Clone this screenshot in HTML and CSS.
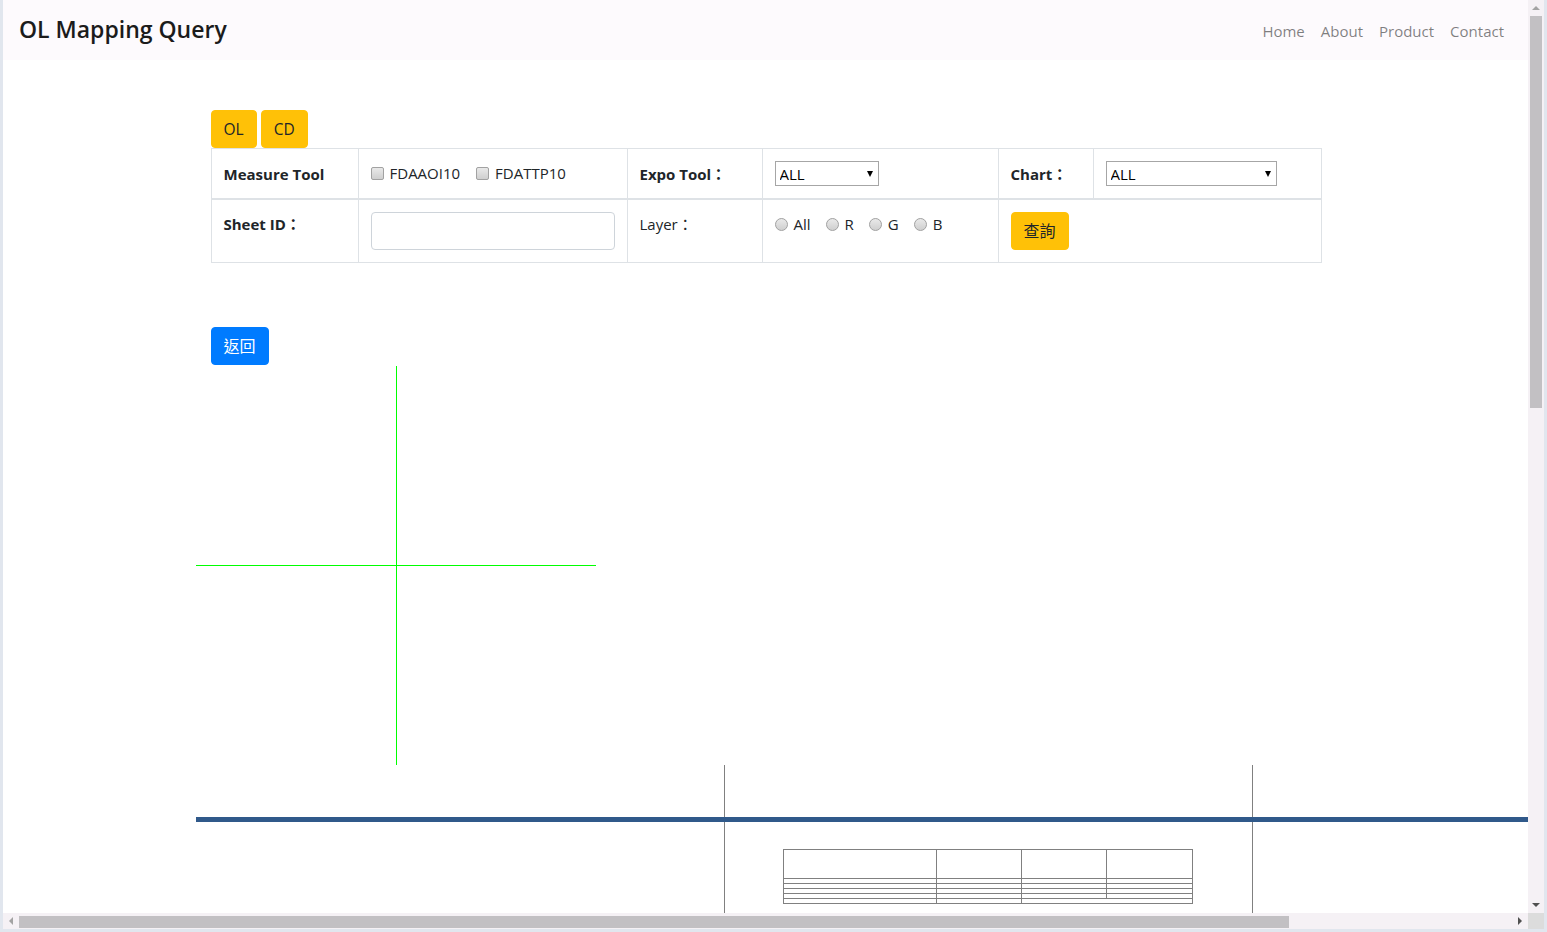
FILE: index.html
```html
<!DOCTYPE html>
<html lang="zh-Hant">
<head>
<meta charset="utf-8">
<title>OL Mapping Query</title>
<link rel="stylesheet" href="styles.css">
</head>
<body>
<div class="window">
  <div class="viewport">
    <nav class="navbar">
      <a class="brand">OL Mapping Query</a>
      <ul class="nav-links">
        <li>Home</li>
        <li>About</li>
        <li>Product</li>
        <li>Contact</li>
      </ul>
    </nav>
    <main class="container">
      <div class="tabs">
        <button class="btn btn-warning">OL</button>
        <button class="btn btn-warning">CD</button>
      </div>
      <table class="query">
        <colgroup>
          <col class="c1"><col class="c2"><col class="c3"><col class="c4"><col class="c5"><col class="c6">
        </colgroup>
        <thead>
          <tr>
            <th>Measure Tool</th>
            <td>
              <div class="checks">
                <label class="chk"><input type="checkbox"><span>FDAAOI10</span></label>
                <label class="chk"><input type="checkbox"><span>FDATTP10</span></label>
              </div>
            </td>
            <th>Expo Tool：</th>
            <td><span class="sel sel-expo"><select><option>ALL</option></select></span></td>
            <th>Chart：</th>
            <td><span class="sel sel-chart"><select><option>ALL</option></select></span></td>
          </tr>
        </thead>
        <tbody>
          <tr>
            <th>Sheet ID：</th>
            <td><input class="form-control" type="text"></td>
            <td>Layer：</td>
            <td>
              <div class="radios">
                <label class="rad"><input type="radio" name="layer"><span>All</span></label>
                <label class="rad"><input type="radio" name="layer"><span>R</span></label>
                <label class="rad"><input type="radio" name="layer"><span>G</span></label>
                <label class="rad"><input type="radio" name="layer"><span>B</span></label>
              </div>
            </td>
            <td colspan="2"><button class="btn btn-warning btn-cjk">查詢</button></td>
          </tr>
        </tbody>
      </table>
      <button class="btn btn-primary btn-cjk back">返回</button>
      <div class="chart">
        <div class="crosshair"></div>
        <div class="lower">
          <div class="col"></div>
          <div class="col col-mid">
            <table class="mini">
              <tr class="mh"><td class="m1"></td><td class="m2"></td><td class="m3"></td><td class="m4"></td></tr>
              <tr class="mr"><td></td><td></td><td></td><td></td></tr>
              <tr class="mr"><td></td><td></td><td></td><td></td></tr>
              <tr class="mr"><td></td><td></td><td></td><td></td></tr>
              <tr class="mr"><td></td><td></td><td></td><td></td></tr>
              <tr class="mr"><td></td><td></td><td colspan="2"></td></tr>
            </table>
          </div>
          <div class="col"></div>
          <div class="blue-line"></div>
        </div>
      </div>
    </main>
  </div>
  <div class="vscroll">
    <div class="sbtn"><span class="tri-up"></span></div>
    <div class="vthumb"></div>
    <div class="vspace"></div>
    <div class="sbtn"><span class="tri-down"></span></div>
  </div>
  <div class="hscroll">
    <div class="sbtn"><span class="tri-left"></span></div>
    <div class="hthumb"></div>
    <div class="hspace"></div>
    <div class="sbtn"><span class="tri-right"></span></div>
  </div>
  <div class="corner"></div>
</div>
</body>
</html>
```

FILE: styles.css
```css
html, body {
  margin: 0;
  padding: 0;
  overflow: hidden;
  background: #fff;
}

body {
  font-family: "Open Sans", "Noto Sans CJK TC", sans-serif;
}

.window {
  width: 1547px;
  height: 932px;
  box-sizing: border-box;
  border-left: 3px solid #e1e6ee;
  border-right: 3px solid #e1e6ee;
  border-bottom: 3px solid #e1e6ee;
  display: grid;
  grid-template-columns: 1525px 16px;
  grid-template-rows: 913px 16px;
}

.viewport {
  overflow: hidden;
  background: #fff;
  color: #212529;
  font-size: 15px;
  line-height: 24px;
}

/* navbar */
.navbar {
  height: 60px;
  box-sizing: border-box;
  background: #fdfafd;
  display: flex;
  align-items: center;
  justify-content: space-between;
  padding: 0 16px;
}

.brand {
  font-size: 23px;
  font-weight: 600;
  color: #1b1b1b;
  margin-top: -3px;
}

.nav-links {
  display: flex;
  list-style: none;
  margin: 2px 0 0;
  padding: 0;
}

.nav-links li {
  padding: 0 8px;
  color: rgba(0, 0, 0, 0.5);
  font-size: 15px;
}

/* container */
.container {
  width: 1140px;
  box-sizing: border-box;
  margin: 50px auto 0;
  padding: 0 15px;
}

.tabs {
  display: flex;
  gap: 4px;
}

.btn {
  font-family: inherit;
  font-size: 15.5px;
  line-height: 24px;
  height: 38px;
  padding: 6px 12px;
  border: 1px solid transparent;
  border-radius: 4px;
  cursor: pointer;
}

.btn-cjk {
  font-size: 16px;
}

.btn-warning {
  background: #ffc107;
  border-color: #ffc107;
  color: #212529;
}

.btn-primary {
  background: #007bff;
  border-color: #007bff;
  color: #fff;
}

/* query table */
.query {
  width: 1110px;
  border-collapse: collapse;
  table-layout: fixed;
}

.c1 { width: 147px; }
.c2 { width: 269px; }
.c3 { width: 135px; }
.c4 { width: 236px; }
.c5 { width: 95px; }
.c6 { width: 228px; }

.query th,
.query td {
  border: 1px solid #dee2e6;
  padding: 12px;
  text-align: left;
  vertical-align: top;
  font-weight: 400;
}

.query th {
  font-weight: 700;
}

.query thead th,
.query thead td {
  border-bottom: 2px solid #dee2e6;
}

.query thead th {
  padding-top: 13px;
  padding-bottom: 11px;
}

.checks,
.radios {
  display: flex;
  align-items: center;
  height: 24px;
}

.checks { gap: 16px; }
.radios { gap: 15px; }

.chk,
.rad {
  display: flex;
  align-items: center;
  gap: 6px;
}

.chk input,
.rad input {
  appearance: none;
  -webkit-appearance: none;
  margin: 0;
  width: 13px;
  height: 13px;
  box-sizing: border-box;
  border: 1px solid #a2a2a2;
  background: linear-gradient(#e9e9e9, #cfcfcf);
}

.chk input {
  border-radius: 2px;
}

.rad input {
  border-radius: 50%;
}

.sel {
  position: relative;
  display: block;
}

.sel select {
  appearance: none;
  -webkit-appearance: none;
  display: block;
  height: 25px;
  box-sizing: border-box;
  border: 1px solid #a6a6a6;
  border-radius: 0;
  background: #fff;
  color: #000;
  font-family: inherit;
  font-size: 15px;
  padding: 0 4px;
  margin-top: 0;
}

.sel-expo select { width: 104px; }
.sel-chart select { width: 171px; }

.sel::after {
  content: "";
  position: absolute;
  top: 10px;
  border-left: 3px solid transparent;
  border-right: 3px solid transparent;
  border-top: 6px solid #000;
}

.sel-expo::after { left: 92px; }
.sel-chart::after { left: 159px; }

.form-control {
  display: block;
  width: 100%;
  height: 38px;
  box-sizing: border-box;
  border: 1px solid #ced4da;
  border-radius: 4px;
  padding: 6px 12px;
  font: inherit;
}

.back {
  display: block;
  margin-top: 64px;
}

/* chart canvas */
.chart {
  margin-left: -15px;
}

.crosshair {
  position: relative;
  width: 400px;
  height: 400px;
}

.crosshair::before {
  content: "";
  position: absolute;
  left: 200px;
  top: 1px;
  width: 1px;
  bottom: 0;
  background: #00ff00;
}

.crosshair::after {
  content: "";
  position: absolute;
  left: 0;
  top: 200px;
  width: 400px;
  height: 1px;
  background: #00ff00;
}

.lower {
  position: relative;
  width: 1584px;
  height: 180px;
  display: grid;
  grid-template-columns: repeat(3, 528px);
}

.col {
  box-sizing: border-box;
}

.col + .col {
  border-left: 1px solid #808080;
}

.col-mid {
  padding-top: 84px;
}

.blue-line {
  position: absolute;
  left: 0;
  right: 0;
  top: 52px;
  height: 5px;
  background: #30598a;
}

.mini {
  border-collapse: collapse;
  margin: 0 auto;
}

.mini td {
  border: 1px solid #808080;
  padding: 0;
  font-size: 0;
  line-height: 0;
}

.m1 { width: 152px; }
.m2 { width: 84px; }
.m3 { width: 84px; }
.m4 { width: 85px; }

.mh td { height: 28px; }
.mr td { height: 4px; }

/* scrollbars */
.vscroll {
  background: #f5f1f5;
  display: flex;
  flex-direction: column;
}

.hscroll {
  background: #f5f1f5;
  display: flex;
}

.sbtn {
  flex: 0 0 16px;
  width: 16px;
  height: 16px;
  display: flex;
  align-items: center;
  justify-content: center;
}

.vthumb {
  height: 392px;
  margin: 0 2px;
  background: #c2c0c3;
}

.vspace,
.hspace {
  flex: 1;
}

.hthumb {
  width: 1270px;
  margin: 3px 0 1px;
  background: #c2c0c3;
}

.tri-up {
  border-left: 4px solid transparent;
  border-right: 4px solid transparent;
  border-bottom: 4px solid #a3a3a3;
}

.tri-down {
  border-left: 4px solid transparent;
  border-right: 4px solid transparent;
  border-top: 4px solid #505050;
}

.tri-left {
  border-top: 4px solid transparent;
  border-bottom: 4px solid transparent;
  border-right: 4px solid #a3a3a3;
}

.tri-right {
  border-top: 4px solid transparent;
  border-bottom: 4px solid transparent;
  border-left: 4px solid #505050;
}

.corner {
  background: #dcdcdc;
}
```
